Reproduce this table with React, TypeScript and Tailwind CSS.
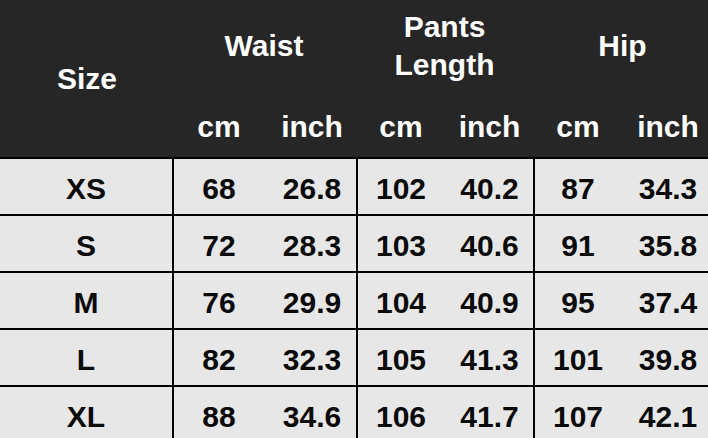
const rows = [
  { size: "XS", w: ["68", "26.8"], p: ["102", "40.2"], h: ["87", "34.3"] },
  { size: "S", w: ["72", "28.3"], p: ["103", "40.6"], h: ["91", "35.8"] },
  { size: "M", w: ["76", "29.9"], p: ["104", "40.9"], h: ["95", "37.4"] },
  { size: "L", w: ["82", "32.3"], p: ["105", "41.3"], h: ["101", "39.8"] },
  { size: "XL", w: ["88", "34.6"], p: ["106", "41.7"], h: ["107", "42.1"] },
];

function Cell({ text, className }: { text: string; className: string }) {
  return (
    <div className={`flex items-center justify-center pt-1 ${className}`}>
      {text}
    </div>
  );
}

export default function App() {
  return (
    <div
      className="w-[708px] h-[438px] overflow-hidden bg-[#e7e7e7] text-[30px] font-bold leading-[30px]"
      style={{ fontFamily: '"Liberation Sans", Arial, sans-serif' }}
    >
      {/* Header */}
      <div className="flex h-[157px] bg-[#262626] text-white">
        <div className="w-[172px] flex items-center justify-center pl-[2px]">Size</div>
        <div className="flex-1 flex flex-col">
          <div className="flex h-[91px] items-center text-center leading-[38px]">
            <div className="w-[184px]">Waist</div>
            <div className="w-[177px]">
              Pants
              <br />
              Length
            </div>
            <div className="w-[175px] pl-[4px]">Hip</div>
          </div>
          <div className="flex mt-[21px] h-[30px] text-center">
            <div className="w-[92px] pl-[2px]">cm</div>
            <div className="w-[92px] pl-[4px]">inch</div>
            <div className="w-[88px] pl-[2px]">cm</div>
            <div className="w-[89px] pl-[2px]">inch</div>
            <div className="w-[88px] pl-[2px]">cm</div>
            <div className="w-[87px] pl-[7px]">inch</div>
          </div>
        </div>
      </div>

      {/* Body */}
      {rows.map((r) => (
        <div key={r.size} className="flex h-[57px] border-t-2 border-black text-[#0a0a0a]">
          <Cell text={r.size} className="w-[172px]" />
          <Cell text={r.w[0]} className="w-[92px] border-l-2 border-black" />
          <Cell text={r.w[1]} className="w-[92px] pl-[4px]" />
          <Cell text={r.p[0]} className="w-[88px] border-l-2 border-black" />
          <Cell text={r.p[1]} className="w-[89px] pl-[2px]" />
          <Cell text={r.h[0]} className="w-[88px] border-l-2 border-black" />
          <Cell text={r.h[1]} className="w-[87px] pl-[7px]" />
        </div>
      ))}
    </div>
  );
}
